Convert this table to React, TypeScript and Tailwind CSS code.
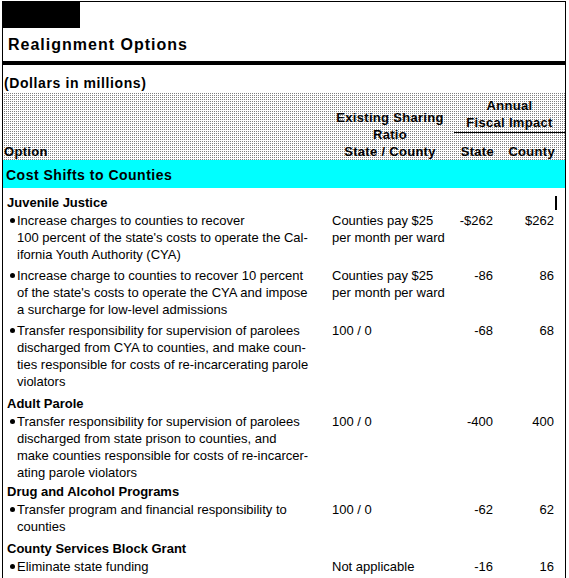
type Item = {
  lines: string[];
  ratio: string[];
  state: string;
  county: string;
  pb: string;
};

type Group = {
  title: string;
  items: Item[];
};

const groups: Group[] = [
  {
    title: "Juvenile Justice",
    items: [
      {
        lines: [
          "Increase charges to counties to recover",
          "100 percent of the state's costs to operate the Cal-",
          "ifornia Youth Authority (CYA)",
        ],
        ratio: ["Counties pay $25", "per month per ward"],
        state: "-$262",
        county: "$262",
        pb: "pb-[4px]",
      },
      {
        lines: [
          "Increase charge to counties to recover 10 percent",
          "of the state's costs to operate the CYA and impose",
          "a surcharge for low-level admissions",
        ],
        ratio: ["Counties pay $25", "per month per ward"],
        state: "-86",
        county: "86",
        pb: "pb-[4px]",
      },
      {
        lines: [
          "Transfer responsibility for supervision of parolees",
          "discharged from CYA to counties, and make coun-",
          "ties responsible for costs of re-incarcerating parole",
          "violators",
        ],
        ratio: ["100 / 0"],
        state: "-68",
        county: "68",
        pb: "pb-[5px]",
      },
    ],
  },
  {
    title: "Adult Parole",
    items: [
      {
        lines: [
          "Transfer responsibility for supervision of parolees",
          "discharged from state prison to counties, and",
          "make counties responsible for costs of re-incarcer-",
          "ating parole violators",
        ],
        ratio: ["100 / 0"],
        state: "-400",
        county: "400",
        pb: "pb-[2px]",
      },
    ],
  },
  {
    title: "Drug and Alcohol Programs",
    items: [
      {
        lines: ["Transfer program and financial responsibility to", "counties"],
        ratio: ["100 / 0"],
        state: "-62",
        county: "62",
        pb: "pb-[5px]",
      },
    ],
  },
  {
    title: "County Services Block Grant",
    items: [
      {
        lines: ["Eliminate state funding"],
        ratio: ["Not applicable"],
        state: "-16",
        county: "16",
        pb: "pb-0",
      },
    ],
  },
];

function Row({ item }: { item: Item }) {
  return (
    <div className={`flex text-[13px] leading-[17px] ${item.pb}`}>
      <div className="w-[323px] flex">
        <div className="w-[14px] shrink-0 pt-[6px]">
          <div className="ml-[7px] w-[5px] h-[5px] rounded-full bg-black"></div>
        </div>
        <div className="whitespace-nowrap">
          {item.lines.map((l, i) => (
            <div key={i}>{l}</div>
          ))}
        </div>
      </div>
      <div className="w-[128px] pl-[6px] whitespace-nowrap">
        {item.ratio.map((r, i) => (
          <div key={i}>{r}</div>
        ))}
      </div>
      <div className="w-[43px] text-right pr-[4px]">{item.state}</div>
      <div className="flex-1 text-right pr-[11px]">{item.county}</div>
    </div>
  );
}

export default function App() {
  return (
    <div
      className="w-[569px] h-[578px] bg-white overflow-hidden text-black"
      style={{ fontFamily: '"Liberation Sans", Arial, sans-serif' }}
    >
      <div className="ml-[2px] mt-[1px] w-[564px] min-h-[577px] border-t border-l border-r border-black">
        {/* Black tab */}
        <div className="w-[77px] h-[26px] bg-black"></div>

        {/* Title */}
        <div className="h-[33px] flex items-center pl-[5px] text-[16px] font-bold tracking-[1px]">
          Realignment Options
        </div>
        <div className="h-[4px] bg-black"></div>

        <div className="h-[28px] pt-[10px] pl-[1px] text-[14px] leading-[17px] font-bold tracking-[0.6px]">
          (Dollars in millions)
        </div>

        {/* Column headings */}
        <div className="h-[67px] flex items-end text-[13px] leading-[17px] font-bold tracking-[0.3px] bg-[repeating-conic-gradient(#808080_0_25%,#ffffff_0_100%)] bg-[length:2px_2px]">
          <div className="w-[323px] pl-[1px]">Option</div>
          <div className="w-[128px] text-center">
            <div>Existing Sharing</div>
            <div>Ratio</div>
            <div>State / County</div>
          </div>
          <div className="flex-1">
            <div className="text-center">
              <div>Annual</div>
              <div>Fiscal Impact</div>
            </div>
            <div className="border-t border-black mt-px pt-[10px] flex">
              <div className="w-[43px] text-right pr-[3px]">State</div>
              <div className="flex-1 text-right pr-[10px]">County</div>
            </div>
          </div>
        </div>

        <div className="h-[28px] pt-[7px] pl-[3px] bg-[#00ffff] text-[14px] leading-[17px] font-bold tracking-[0.5px]">
          Cost Shifts to Counties
        </div>

        {groups.map((g, gi) => (
          <div key={g.title} className={gi === 0 ? "mt-[6px]" : ""}>
            <div className="h-[18px] leading-[18px] pl-[4px] text-[13px] font-bold flex justify-between items-start">
              <span>{g.title}</span>
              {gi === 0 && <span className="w-[2px] h-[14px] bg-black mr-[8px] mt-[2px]"></span>}
            </div>
            {g.items.map((it, i) => (
              <Row key={i} item={it} />
            ))}
          </div>
        ))}
      </div>
    </div>
  );
}
